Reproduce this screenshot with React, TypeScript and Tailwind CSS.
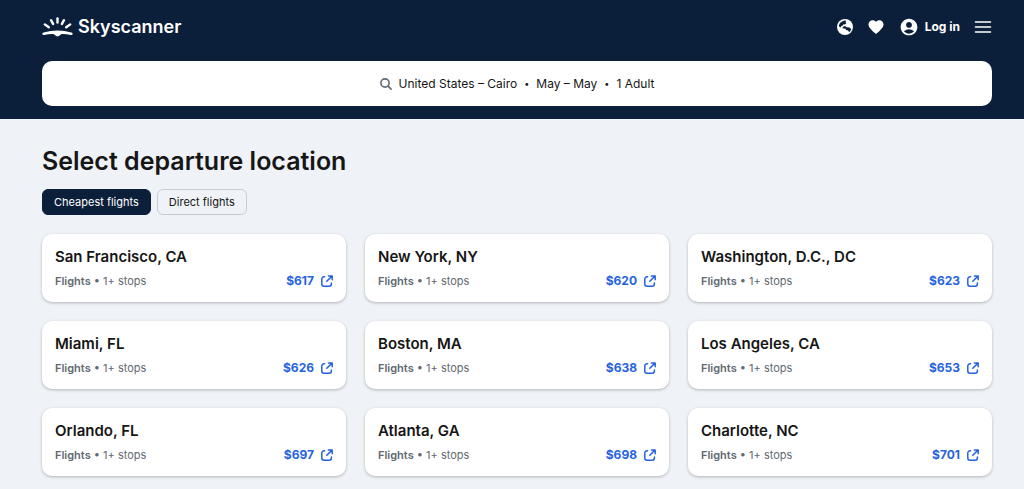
import { useState } from 'react';
import { MdAccountCircle, MdFavorite } from 'react-icons/md';

interface Destination {
  city: string;
  price: string;
}

const destinations: Destination[] = [
  { city: 'San Francisco, CA', price: '$617' },
  { city: 'New York, NY', price: '$620' },
  { city: 'Washington, D.C., DC', price: '$623' },
  { city: 'Miami, FL', price: '$626' },
  { city: 'Boston, MA', price: '$638' },
  { city: 'Los Angeles, CA', price: '$653' },
  { city: 'Orlando, FL', price: '$697' },
  { city: 'Atlanta, GA', price: '$698' },
  { city: 'Charlotte, NC', price: '$701' },
];

const tabs = ['Cheapest flights', 'Direct flights'];

function SunLogo() {
  return (
    <svg className="h-5 w-8" viewBox="0 0 32 20" fill="none" aria-hidden="true">
      <g stroke="currentColor" strokeWidth="2.4" strokeLinecap="round">
        <path d="M15.5 1.400v4.200" />
        <path d="M9 3.200l2.100 3.700" />
        <path d="M22 3.200l-2.100 3.700" />
        <path d="M2.800 7.400l4 2.900" />
        <path d="M28.200 7.400l-4 2.900" />
      </g>
      <path
        d="M15.500 13.400c-4.600 0-9.400.8-13.900 2.100-.9.300-1.400.9-1.300 1.600.2.700.9 1 1.800.8 2.800-.5 5.600-.8 8-.8 1.400 0 2.200.5 3 1.200.8.7 1.500 1.100 2.400 1.100s1.600-.4 2.400-1.100c.8-.7 1.600-1.200 3-1.200 2.400 0 5.200.3 8 .8.9.2 1.600-.1 1.800-.8.1-.7-.4-1.300-1.300-1.600-4.500-1.300-9.300-2.100-13.900-2.100z"
        fill="currentColor"
      />
    </svg>
  );
}

function GlobeIcon() {
  return (
    <svg className="size-4" viewBox="0 0 16 16" aria-hidden="true">
      <circle cx="8" cy="8" r="8" fill="currentColor" />
      <g fill="#0c1f3a">
        <path d="M4.200 3.100L7.400 1.500l1.800.3-.7 1.500.9.9-1.500 1.300-1.400-.3-.7 1.300-1.500.5-.5 1.600L2 7.600c-.1-1.900.7-3.400 2.200-4.500z" />
        <path d="M5.600 7.900l2.500-.9 1.600 1.200 2.800.3 1.800 1.700c-.5 1.300-1.300 2.300-2.300 3l-.8-1.700-2.100-.6-.9-1.300-2.300-.2z" />
      </g>
    </svg>
  );
}

function SearchIcon() {
  return (
    <svg className="size-3 text-[#626971]" viewBox="0 0 12 12" fill="none" stroke="currentColor" strokeWidth="1.600" strokeLinecap="round" aria-hidden="true">
      <circle cx="5" cy="5" r="4.100" />
      <path d="M8.100 8.100l3 3" />
    </svg>
  );
}

function NewWindowIcon() {
  return (
    <svg className="size-3" viewBox="0 0 12 12" fill="none" stroke="currentColor" strokeWidth="1.500" strokeLinecap="round" strokeLinejoin="round" aria-hidden="true">
      <path d="M3.600 1.800H3A2.200 2.200 0 0 0 .8 4V9A2.200 2.200 0 0 0 3 11.200h5.200A2.200 2.200 0 0 0 10.400 9V8" />
      <path d="M7.400.9h3.800v3.800M11 1.100L5.800 6.300" />
    </svg>
  );
}

function DestinationCard({ city, price }: Destination) {
  return (
    <a
      href="#"
      className="flex flex-col gap-1 rounded-[10px] bg-white px-[13px] pt-[13px] pb-[11px] shadow-[0_1px_3px_rgba(37,32,31,0.3)]"
    >
      <h2 className="text-[15px] leading-5 font-semibold text-[#161616]">{city}</h2>
      <div className="flex items-center justify-between leading-5">
        <p className="text-[11px] text-[#626971]">
          <span className="font-semibold">Flights</span> • 1+ stops
        </p>
        <span className="flex items-center gap-[7px] text-xs leading-5 font-bold text-[#2563e0]">
          {price}
          <NewWindowIcon />
        </span>
      </div>
    </a>
  );
}

export default function App() {
  const [activeTab, setActiveTab] = useState(tabs[0]);

  return (
    <div className="min-h-screen bg-[#eff3f8] font-['Inter',sans-serif] text-[#161616]">
      <header className="bg-[#0c1f3a] pr-8 pb-[13px] pl-[42px] text-white">
        <div className="flex h-[61px] items-center justify-between pb-2">
          <a href="#" className="flex items-center gap-1 text-lg leading-6 font-semibold">
            <SunLogo />
            Skyscanner
          </a>
          <nav className="flex items-center gap-[14px]">
            <button type="button" aria-label="Regional settings">
              <GlobeIcon />
            </button>
            <button type="button" aria-label="Saved">
              <MdFavorite className="size-[18px]" />
            </button>
            <button type="button" className="flex items-center gap-1.5 text-xs font-bold">
              <MdAccountCircle className="size-5" />
              Log in
            </button>
            <button type="button" aria-label="Menu">
              <svg className="h-3 w-[18px]" viewBox="0 0 18 12" stroke="currentColor" strokeWidth="1.600" strokeLinecap="round" aria-hidden="true">
                <path d="M1.500 1h15M1.500 6h15M1.500 11h15" />
              </svg>
            </button>
          </nav>
        </div>
        <button
          type="button"
          className="flex h-[45px] w-full items-center justify-center gap-[7px] rounded-[10px] bg-white text-xs text-[#161616]"
        >
          <SearchIcon />
          <span>United States – Cairo</span>
          <span className="text-[9px]">•</span>
          <span>May – May</span>
          <span className="text-[9px]">•</span>
          <span>1 Adult</span>
        </button>
      </header>

      <main className="pt-[26px] pr-8 pb-3 pl-[42px]">
        <h1 className="text-[25px] leading-8 font-semibold">Select departure location</h1>
        <div className="mt-3 flex gap-1.5">
          {tabs.map(tab => (
            <button
              key={tab}
              type="button"
              aria-pressed={tab === activeTab}
              onClick={() => setActiveTab(tab)}
              className={`h-[26px] rounded-md border px-[11px] text-[11px] ${
                tab === activeTab
                  ? 'border-[#0c1f3a] bg-[#0c1f3a] text-white'
                  : 'border-[#c8ccd2] text-[#161616]'
              }`}
            >
              {tab}
            </button>
          ))}
        </div>
        <div className="mt-[19px] grid grid-cols-3 gap-[19px]">
          {destinations.map(destination => (
            <DestinationCard key={destination.city} {...destination} />
          ))}
        </div>
      </main>
    </div>
  );
}
